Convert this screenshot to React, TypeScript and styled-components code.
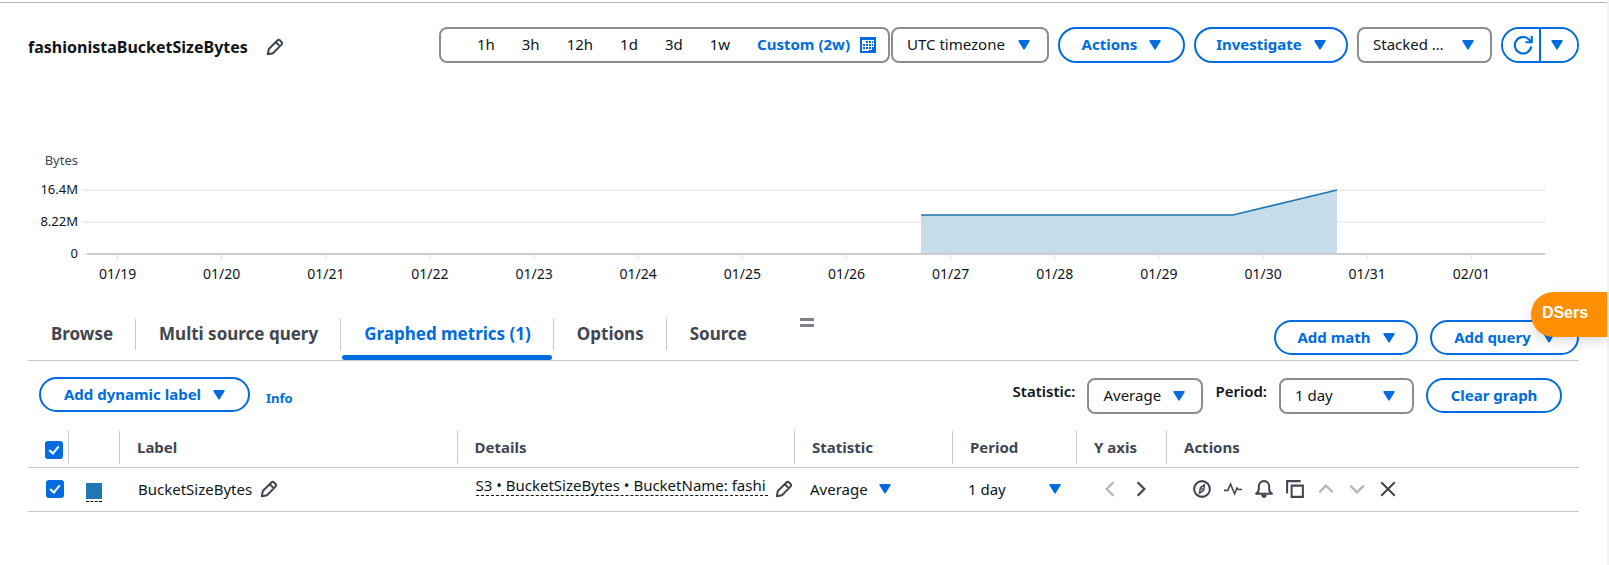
import React from 'react';
import styled, { createGlobalStyle } from 'styled-components';

const blue = '#006ce0';
const ink = '#0f141a';
const slate = '#424650';
const rule = '#c6c6cd';
const outline = '#8c8c94';

const GlobalStyle = createGlobalStyle`
  *, *::before, *::after { box-sizing: border-box; }
  body {
    margin: 0;
    background: #fff;
    color: ${ink};
    font: 15px/20px "Noto Sans", "Open Sans", sans-serif;
  }
  button, select, input { font: inherit; color: inherit; margin: 0; }
  button { cursor: pointer; }
`;

const Page = styled.div`
  position: relative;
  min-height: 100vh;
  padding: 2px 28px 0;
  border-right: 2px solid #f2f2f3;
  &::before {
    content: '';
    display: block;
    height: 1px;
    margin: 0 -28px;
    background: #b4b4bb;
  }
`;

/* ---------- shared controls ---------- */

const PillButton = styled.button<{ $width: number; $tall?: boolean }>`
  display: inline-flex;
  align-items: center;
  justify-content: center;
  gap: 12px;
  flex: none;
  width: ${p => p.$width}px;
  height: ${p => (p.$tall ? 36 : 35)}px;
  padding: 0 0 2px;
  border: 2px solid ${blue};
  border-radius: 18px;
  background: #fff;
  color: ${blue};
  font-weight: 700;
  white-space: nowrap;
  & > svg { margin-top: 2px; }
`;

const IconButton = styled.button<{ $faded?: boolean }>`
  display: inline-flex;
  align-items: center;
  justify-content: center;
  flex: none;
  padding: 0;
  border: 0;
  background: none;
  color: ${p => (p.$faded ? '#b4b4bb' : slate)};
`;

const SelectWrap = styled.span<{ $width: number; $inset: number }>`
  position: relative;
  display: inline-flex;
  flex: none;
  width: ${p => p.$width}px;
  & > svg {
    position: absolute;
    right: ${p => p.$inset}px;
    top: 50%;
    margin-top: -5px;
    color: ${blue};
    pointer-events: none;
  }
`;

const BoxSelect = styled.select`
  appearance: none;
  width: 100%;
  height: 36px;
  padding: 0 14px 2px;
  border: 2px solid ${outline};
  border-radius: 8px;
  background: #fff;
`;

const PlainSelect = styled.select`
  appearance: none;
  width: 100%;
  height: 24px;
  padding: 0;
  border: 0;
  background: transparent;
`;

const Caret = () => (
  <svg width="12" height="10" viewBox="0 0 12 10" aria-hidden="true">
    <path d="M1 .8h10L6 9z" fill="currentColor" stroke="currentColor" strokeWidth="1.4" strokeLinejoin="round" />
  </svg>
);

type SelectProps = {
  label: string;
  options: string[];
  width: number;
  inset: number;
  plain?: boolean;
  id?: string;
};

const Select = ({ label, options, width, inset, plain, id }: SelectProps) => {
  const Control = plain ? PlainSelect : BoxSelect;
  return (
    <SelectWrap $width={width} $inset={inset}>
      <Control id={id} aria-label={label}>
        {options.map(o => (
          <option key={o}>{o}</option>
        ))}
      </Control>
      <Caret />
    </SelectWrap>
  );
};

/* ---------- icons ---------- */

const Svg = styled.svg.attrs({ viewBox: '0 0 16 16', 'aria-hidden': true })`
  display: block;
  fill: none;
  stroke: currentColor;
  stroke-width: 2;
`;

const Pencil = () => (
  <Svg width="18" height="18">
    <path d="M1.6 14.4l.9-4.6 7.6-7.6c.7-.7 1.7-.7 2.4 0l1.3 1.3c.7.7.7 1.7 0 2.4l-7.6 7.6z M8.8 3.8l3.4 3.4" strokeWidth="1.8" strokeLinejoin="round" />
  </Svg>
);
const Calendar = () => (
  <Svg width="16" height="16">
    <path d="M0 0h16v16H0z" fill="currentColor" stroke="none" />
    <path d="M2 3h12v11H2z" fill="#fff" stroke="none" />
    <path d="M6 4h2v2H6zM9 4h2v2H9zM12 4h1v2h-1zM3 7h2v2H3zM6 7h2v2H6zM9 7h2v2H9zM12 7h1v2h-1zM3 10h2v2H3zM6 10h2v2H6zM9 10h2v2H9zM12 10h2v4h-2zM9 13h5v1H9z" fill="currentColor" stroke="none" />
  </Svg>
);
const Refresh = () => (
  <Svg width="20" height="20">
    <path d="M14.6 9.200A6.600 6.600 0 1 1 12.600 3.400l2 2" strokeWidth="1.7" />
    <path d="M15 .8v5h-5" strokeWidth="1.7" />
  </Svg>
);
const Compass = () => (
  <Svg width="18" height="18">
    <circle cx="8" cy="8" r="7" strokeWidth="1.8" />
    <path d="M10.2 4.2L9.4 9.3 5.8 11.8l.8-5.1z" strokeWidth="1.3" />
    <circle cx="8" cy="8" r="0.7" strokeWidth="0.8" />
  </Svg>
);
const Pulse = () => (
  <Svg width="18" height="18">
    <path d="M0 9.2h3.4l2.4-5.6 3.6 8.6 2.2-5 1 1.2H16" strokeWidth="1.4" />
  </Svg>
);
const Bell = () => (
  <Svg width="18" height="18">
    <path d="M1 12.2c1.6-1 2.4-2.2 2.4-4.2V5.8C3.4 3 5.200 1 8 1s4.600 2 4.600 4.800V8c0 2 .8 3.200 2.400 4.200z" strokeWidth="1.8" strokeLinejoin="round" />
    <path d="M5.6 12.8h4.8c0 1.900-.8 3-2.400 3s-2.400-1.100-2.400-3z" fill="currentColor" stroke="none" />
  </Svg>
);
const Copy = () => (
  <Svg width="18" height="18">
    <path d="M5 5h10v10H5z" strokeWidth="1.8" />
    <path d="M1 12V1h12" strokeWidth="1.8" />
  </Svg>
);
const Up = () => (
  <Svg width="18" height="18">
    <path d="M2 11l6-6 6 6" />
  </Svg>
);
const Down = () => (
  <Svg width="18" height="18">
    <path d="M2 5l6 6 6-6" />
  </Svg>
);
const Left = () => (
  <Svg width="18" height="18">
    <path d="M11 2L5 8l6 6" />
  </Svg>
);
const Right = () => (
  <Svg width="18" height="18">
    <path d="M5 2l6 6-6 6" />
  </Svg>
);
const Close = () => (
  <Svg width="18" height="18">
    <path d="M2 2l12 12M14 2L2 14" strokeWidth="1.8" />
  </Svg>
);

/* ---------- header ---------- */

const Header = styled.header`
  display: flex;
  align-items: center;
  justify-content: space-between;
  padding-top: 24px;
`;

const TitleGroup = styled.div`
  display: flex;
  align-items: center;
  gap: 18px;
  padding-top: 4px;
`;

const Title = styled.h1`
  margin: 0;
  font-size: 16px;
  line-height: 24px;
  font-weight: 700;
`;

const Controls = styled.div`
  display: flex;
  align-items: center;
  gap: 9px;
`;

const TimeGroup = styled.div`
  display: flex;
  gap: 1px;
`;

const RangeBar = styled.div`
  display: flex;
  align-items: center;
  gap: 27px;
  height: 36px;
  padding: 0 12px 0 36px;
  border: 2px solid ${outline};
  border-radius: 8px;
`;

const RangeButton = styled.button<{ $active?: boolean }>`
  display: inline-flex;
  align-items: center;
  gap: 10px;
  padding: 0 0 2px;
  border: 0;
  background: none;
  color: ${p => (p.$active ? blue : ink)};
  font-weight: ${p => (p.$active ? 700 : 400)};
  white-space: nowrap;
  & > svg { margin-top: 2px; }
`;

const SplitButton = styled.div`
  display: flex;
  height: 36px;
  border: 2px solid ${blue};
  border-radius: 18px;
  overflow: hidden;
`;

const SplitPart = styled.button<{ $last?: boolean }>`
  display: flex;
  align-items: center;
  justify-content: center;
  width: ${p => (p.$last ? 38 : 36)}px;
  padding: ${p => (p.$last ? '0 4px 0 0' : '0 0 0 4px')};
  border: 0;
  border-left: ${p => (p.$last ? `2px solid ${blue}` : '0')};
  background: #fff;
  color: ${blue};
`;

/* ---------- chart ---------- */

const ChartArea = styled.figure`
  display: grid;
  grid-template-columns: 50px 1fr;
  column-gap: 4px;
  margin: 87px 34px 0 0;
`;

const YAxis = styled.div`
  display: flex;
  flex-direction: column;
  font-size: 13px;
  line-height: 32px;
  text-align: right;
`;

const Unit = styled.span`
  margin-bottom: 3px;
  line-height: 20px;
  color: ${slate};
`;

const Plot = styled.svg`
  display: block;
  width: 100%;
  height: 132px;
  overflow: visible;
  font-size: 14px;
  fill: ${ink};
`;

const days = ['01/19', '01/20', '01/21', '01/22', '01/23', '01/24', '01/25', '01/26', '01/27', '01/28', '01/29', '01/30', '01/31', '02/01'];

const Chart = () => (
  <ChartArea>
    <YAxis>
      <Unit>Bytes</Unit>
      <span>16.4M</span>
      <span>8.22M</span>
      <span>0</span>
    </YAxis>
    <Plot role="img" aria-label="BucketSizeBytes over time">
      <rect x="0" y="39" width="100%" height="2" fill="#eeeeee" />
      <rect x="0" y="71" width="100%" height="2" fill="#eeeeee" />
      <rect x="0" y="104" width="5" height="1" fill="#eeeeee" />
      {days.map((d, i) => {
        const x = `${2.43 + i * 7.118}%`;
        return (
          <g key={d}>
            <line x1={x} x2={x} y1="105" y2="111" stroke="#e6e6e6" />
            <text x={x} y="129" textAnchor="middle">{d}</text>
          </g>
        );
      })}
      <svg x="0" y="0" width="100%" height="104" viewBox="0 0 1463 104" preserveAspectRatio="none">
        <path d="M839 104V65h312L1255 40V104z" fill="#c7dcea" />
        <path d="M839 65h312L1255 40" fill="none" stroke="#1f77b4" strokeWidth="1.5" vectorEffect="non-scaling-stroke" />
      </svg>
      <line x1="5" x2="100%" y1="104" y2="104" stroke="#cccccc" strokeWidth="2" />
    </Plot>
  </ChartArea>
);

/* ---------- tabs ---------- */

const TabBar = styled.div`
  position: relative;
  display: flex;
  align-items: flex-start;
  justify-content: space-between;
  height: 49px;
  margin-top: 30px;
  border-bottom: 1px solid ${rule};
`;

const TabList = styled.div`
  display: flex;
  padding-top: 7px;
`;

const Tab = styled.button<{ $active?: boolean }>`
  position: relative;
  height: 31px;
  padding: 0 22px 1px 23px;
  border: 0;
  border-right: 1px solid ${rule};
  background: none;
  color: ${p => (p.$active ? blue : slate)};
  font-size: 17px;
  line-height: 24px;
  font-weight: 700;
  white-space: nowrap;
  &:last-child { border-right: 0; }
  &::after {
    content: '';
    display: ${p => (p.$active ? 'block' : 'none')};
    position: absolute;
    left: 1px;
    right: 1px;
    bottom: -10px;
    height: 5px;
    border-radius: 3px;
    background: ${blue};
  }
`;

const DragHandle = styled.span`
  position: absolute;
  top: 6px;
  left: 50%;
  width: 14px;
  height: 9px;
  margin-left: -4px;
  border: solid #7d8087;
  border-width: 3px 0;
  cursor: ns-resize;
`;

const TabActions = styled.div`
  display: flex;
  gap: 12px;
  padding-top: 8px;
`;

/* ---------- metric toolbar ---------- */

const Toolbar = styled.div`
  display: flex;
  justify-content: space-between;
  align-items: flex-start;
  padding: 16px 17px 0 11px;
`;

const ToolGroup = styled.div`
  display: flex;
  align-items: flex-start;
`;

const InfoLink = styled.a`
  margin: 11px 0 0 16px;
  color: ${blue};
  font-size: 13px;
  font-weight: 700;
  text-decoration: none;
`;

const Filters = styled.div`
  display: flex;
  align-items: flex-start;
  gap: 12px;
  padding-top: 1px;
`;

const FieldLabel = styled.label`
  padding-top: 3px;
  font-weight: 600;
`;

/* ---------- table ---------- */

const MetricTable = styled.table`
  width: 100%;
  margin-top: 17px;
  border-collapse: collapse;
  table-layout: fixed;
`;

const Col = styled.col<{ $w?: number }>`
  width: ${p => (p.$w ? `${p.$w}px` : 'auto')};
`;

const Th = styled.th`
  position: relative;
  height: 36px;
  padding: 0 17px 4px;
  border-bottom: 1px solid ${rule};
  color: ${slate};
  font-weight: 700;
  text-align: left;
  &:not(:last-child)::after {
    content: '';
    position: absolute;
    top: 0;
    right: 0;
    height: 33px;
    border-right: 1px solid ${rule};
  }
`;

const Td = styled.td<{ $pad?: number }>`
  height: 44px;
  padding: 0 0 0 ${p => p.$pad ?? 18}px;
  border-bottom: 1px solid ${rule};
`;

const CheckTh = styled(Th)`
  padding: 2px 0 0 17px;
`;

const Checkbox = styled.input.attrs({ type: 'checkbox' })`
  appearance: none;
  display: block;
  width: 18px;
  height: 18px;
  border-radius: 3px;
  background: ${blue};
  &:checked::after {
    content: '';
    display: block;
    width: 6px;
    height: 10px;
    margin: 3px 0 0 6px;
    border: solid #fff;
    border-width: 0 2px 2px 0;
    transform: rotate(40deg);
  }
`;

const Swatch = styled.button`
  display: block;
  width: 16px;
  height: 19px;
  margin-top: 6px;
  padding: 0 0 2px;
  border: 0;
  border-bottom: 1px dashed ${ink};
  background: #1f77b4 content-box;
`;

const Inline = styled.div<{ $gap: number }>`
  display: flex;
  align-items: center;
  gap: ${p => p.$gap}px;
`;

const Details = styled.span`
  flex: 1;
  min-width: 0;
  margin-bottom: 8px;
  overflow: hidden;
  border-bottom: 1px dashed ${ink};
  line-height: 20px;
  white-space: nowrap;
`;

const DetailsCell = styled(Inline)`
  padding-right: 2px;
`;

/* ---------- floating badge ---------- */

const Badge = styled.button`
  position: absolute;
  top: 292px;
  right: 0;
  width: 76px;
  height: 45px;
  padding: 0 8px 3px 0;
  border: 0;
  border-radius: 23px 0 0 23px;
  background: #ff8f00;
  color: #fff;
  font: 700 16px/20px "Liberation Sans", Arial, sans-serif;
  box-shadow: 0 4px 12px rgba(0, 0, 0, 0.15);
`;

const rowActions = [
  { name: 'Investigate', icon: <Compass /> },
  { name: 'Detect anomalies', icon: <Pulse /> },
  { name: 'Create alarm', icon: <Bell /> },
  { name: 'Duplicate', icon: <Copy /> },
  { name: 'Move up', icon: <Up />, faded: true },
  { name: 'Move down', icon: <Down />, faded: true },
  { name: 'Remove', icon: <Close /> },
];

const tabs = ['Browse', 'Multi source query', 'Graphed metrics (1)', 'Options', 'Source'];

export default function App() {
  return (
    <>
      <GlobalStyle />
      <Page>
        <Header>
          <TitleGroup>
            <Title>fashionistaBucketSizeBytes</Title>
            <IconButton aria-label="Edit title"><Pencil /></IconButton>
          </TitleGroup>
          <Controls>
            <TimeGroup>
              <RangeBar>
                {['1h', '3h', '12h', '1d', '3d', '1w'].map(r => (
                  <RangeButton key={r}>{r}</RangeButton>
                ))}
                <RangeButton $active>Custom (2w) <Calendar /></RangeButton>
              </RangeBar>
              <Select label="Timezone" options={['UTC timezone', 'Local timezone']} width={158} inset={19} />
            </TimeGroup>
            <PillButton $tall $width={127}>Actions <Caret /></PillButton>
            <PillButton $tall $width={154}>Investigate <Caret /></PillButton>
            <Select label="Chart type" options={['Stacked …', 'Line', 'Number']} width={135} inset={18} />
            <SplitButton>
              <SplitPart aria-label="Refresh"><Refresh /></SplitPart>
              <SplitPart $last aria-label="Refresh options"><Caret /></SplitPart>
            </SplitButton>
          </Controls>
        </Header>

        <Chart />

        <TabBar>
          <TabList role="tablist">
            {tabs.map((t, i) => (
              <Tab key={t} role="tab" aria-selected={i === 2} $active={i === 2}>{t}</Tab>
            ))}
          </TabList>
          <DragHandle />
          <TabActions>
            <PillButton $width={144}>Add math <Caret /></PillButton>
            <PillButton $width={149}>Add query <Caret /></PillButton>
          </TabActions>
        </TabBar>

        <Toolbar>
          <ToolGroup>
            <PillButton $width={211}>Add dynamic label <Caret /></PillButton>
            <InfoLink href="#info">Info</InfoLink>
          </ToolGroup>
          <Filters>
            <FieldLabel htmlFor="statistic">Statistic:</FieldLabel>
            <Select id="statistic" label="Statistic" options={['Average', 'Sum', 'Maximum']} width={116} inset={18} />
            <FieldLabel htmlFor="period">Period:</FieldLabel>
            <Select id="period" label="Period" options={['1 day', '1 hour', '5 minutes']} width={135} inset={19} />
            <PillButton $width={136}>Clear graph</PillButton>
          </Filters>
        </Toolbar>

        <MetricTable>
          <colgroup>
            <Col $w={41} />
            <Col $w={51} />
            <Col />
            <Col />
            <Col $w={158} />
            <Col $w={124} />
            <Col $w={90} />
            <Col $w={412} />
          </colgroup>
          <thead>
            <tr>
              <CheckTh><Checkbox defaultChecked aria-label="Select all metrics" /></CheckTh>
              <Th />
              <Th>Label</Th>
              <Th>Details</Th>
              <Th>Statistic</Th>
              <Th>Period</Th>
              <Th>Y axis</Th>
              <Th>Actions</Th>
            </tr>
          </thead>
          <tbody>
            <tr>
              <Td><Checkbox defaultChecked aria-label="Select BucketSizeBytes" /></Td>
              <Td $pad={17}><Swatch aria-label="Color" /></Td>
              <Td>
                <Inline $gap={8}>
                  BucketSizeBytes
                  <IconButton aria-label="Edit label"><Pencil /></IconButton>
                </Inline>
              </Td>
              <Td>
                <DetailsCell $gap={7}>
                  <Details>S3 • BucketSizeBytes • BucketName: fashi</Details>
                  <IconButton aria-label="Edit details"><Pencil /></IconButton>
                </DetailsCell>
              </Td>
              <Td $pad={15}>
                <Select plain label="Row statistic" options={['Average', 'Sum']} width={81} inset={0} />
              </Td>
              <Td $pad={15}>
                <Select plain label="Row period" options={['1 day', '1 hour']} width={93} inset={0} />
              </Td>
              <Td $pad={24}>
                <Inline $gap={13}>
                  <IconButton $faded aria-label="Left axis"><Left /></IconButton>
                  <IconButton aria-label="Right axis"><Right /></IconButton>
                </Inline>
              </Td>
              <Td $pad={26}>
                <Inline $gap={13}>
                  {rowActions.map(a => (
                    <IconButton key={a.name} aria-label={a.name} $faded={a.faded}>{a.icon}</IconButton>
                  ))}
                </Inline>
              </Td>
            </tr>
          </tbody>
        </MetricTable>

        <Badge>DSers</Badge>
      </Page>
    </>
  );
}
